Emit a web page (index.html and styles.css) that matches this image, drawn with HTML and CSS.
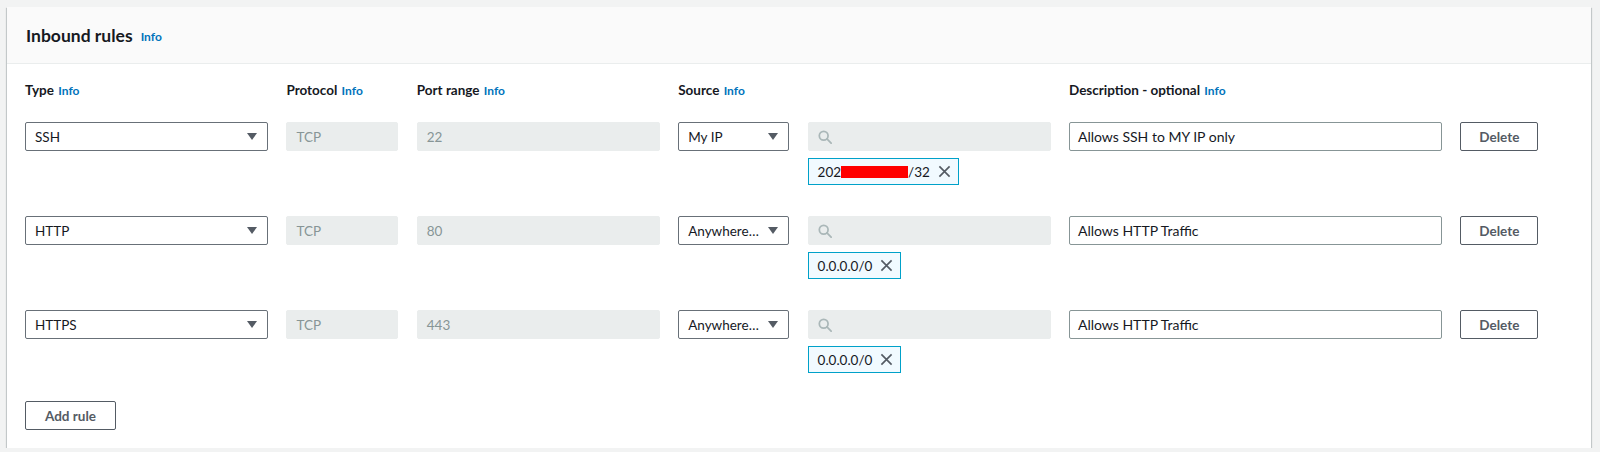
FILE: index.html
```html
<!DOCTYPE html>
<html>
<head>
<meta charset="utf-8">
<link rel="stylesheet" href="styles.css">
</head>
<body>
<div class="panel">
  <div class="panel-header">
    <h2 class="title">Inbound rules</h2>
    <a class="info">Info</a>
  </div>
  <div class="panel-body">
    <div class="grid labels">
      <div class="label">Type <a class="info">Info</a></div>
      <div class="label">Protocol <a class="info">Info</a></div>
      <div class="label">Port range <a class="info">Info</a></div>
      <div class="label">Source <a class="info">Info</a></div>
      <div></div>
      <div class="label">Description - optional <a class="info">Info</a></div>
      <div></div>
    </div>

    <div class="grid rule">
      <div class="select"><span>SSH</span><span class="caret"></span></div>
      <div class="field disabled">TCP</div>
      <div class="field disabled">22</div>
      <div class="select"><span>My IP</span><span class="caret"></span></div>
      <div class="source">
        <div class="field disabled search"><svg class="search-icon" viewBox="0 0 16 16"><circle cx="6.5" cy="6.5" r="5" fill="none" stroke="currentColor" stroke-width="2"/><path d="M10.2 10.2 L15 15" stroke="currentColor" stroke-width="2" stroke-linecap="round"/></svg></div>
        <div class="chip"><span>202</span><span class="redact"></span><span>/32</span><svg class="x" viewBox="0 0 14 14"><path d="M1.5 1.5 L12.5 12.5 M12.5 1.5 L1.5 12.5" stroke="currentColor" stroke-width="1.8" fill="none"/></svg></div>
      </div>
      <div class="field desc">Allows SSH to MY IP only</div>
      <button class="btn">Delete</button>
    </div>

    <div class="grid rule">
      <div class="select"><span>HTTP</span><span class="caret"></span></div>
      <div class="field disabled">TCP</div>
      <div class="field disabled">80</div>
      <div class="select"><span>Anywhere…</span><span class="caret"></span></div>
      <div class="source">
        <div class="field disabled search"><svg class="search-icon" viewBox="0 0 16 16"><circle cx="6.5" cy="6.5" r="5" fill="none" stroke="currentColor" stroke-width="2"/><path d="M10.2 10.2 L15 15" stroke="currentColor" stroke-width="2" stroke-linecap="round"/></svg></div>
        <div class="chip"><span>0.0.0.0/0</span><svg class="x" viewBox="0 0 14 14"><path d="M1.5 1.5 L12.5 12.5 M12.5 1.5 L1.5 12.5" stroke="currentColor" stroke-width="1.8" fill="none"/></svg></div>
      </div>
      <div class="field desc">Allows HTTP Traffic</div>
      <button class="btn">Delete</button>
    </div>

    <div class="grid rule">
      <div class="select"><span>HTTPS</span><span class="caret"></span></div>
      <div class="field disabled">TCP</div>
      <div class="field disabled">443</div>
      <div class="select"><span>Anywhere…</span><span class="caret"></span></div>
      <div class="source">
        <div class="field disabled search"><svg class="search-icon" viewBox="0 0 16 16"><circle cx="6.5" cy="6.5" r="5" fill="none" stroke="currentColor" stroke-width="2"/><path d="M10.2 10.2 L15 15" stroke="currentColor" stroke-width="2" stroke-linecap="round"/></svg></div>
        <div class="chip"><span>0.0.0.0/0</span><svg class="x" viewBox="0 0 14 14"><path d="M1.5 1.5 L12.5 12.5 M12.5 1.5 L1.5 12.5" stroke="currentColor" stroke-width="1.8" fill="none"/></svg></div>
      </div>
      <div class="field desc">Allows HTTP Traffic</div>
      <button class="btn">Delete</button>
    </div>

    <button class="btn add">Add rule</button>
  </div>
</div>
</body>
</html>
```

FILE: styles.css
```css
html, body {
  margin: 0;
  padding: 0;
}
body {
  background: #f2f3f3;
  padding: 7px 9px 0 7px;
  font-family: Lato, "Liberation Sans", sans-serif;
  color: #16191f;
  font-size: 14px;
}
.panel {
  background: #fff;
  box-shadow: 0 1px 1px 0 rgba(0,28,36,.3), 1px 1px 1px 0 rgba(0,28,36,.15), -1px 1px 1px 0 rgba(0,28,36,.15);
  height: 441px;
  box-sizing: border-box;
}
.panel-header {
  height: 57px;
  box-sizing: border-box;
  background: #fafafa;
  border-bottom: 1px solid #eaeded;
  display: flex;
  align-items: center;
  padding: 0 0 0 19px;
  gap: 8px;
}
.title {
  margin: 0;
  font-size: 17.5px;
  font-weight: 700;
  color: #16191f;
}
.info {
  color: #0073bb;
  font-size: 12px;
  font-weight: 700;
  margin-top: 3px;
}
.panel-body {
  padding: 16px 53px 18px 18px;
}
.grid {
  display: grid;
  grid-template-columns: 243px 112px 243px 111px 243px 373px 78px;
  column-gap: 18.4px;
  align-items: start;
}
.labels {
  height: 20px;
  margin-bottom: 22px;
}
.label {
  font-weight: 700;
  font-size: 13.5px;
  line-height: 20px;
}
.label .info {
  margin-left: 1px;
}
.rule {
  margin-bottom: 31px;
}
.rule:last-of-type {
  margin-bottom: 28px;
}
.select, .field {
  height: 29px;
  box-sizing: border-box;
  border: 1px solid #879596;
  border-radius: 2px;
  padding: 0 9px;
  display: flex;
  align-items: center;
  font-size: 13.5px;
  color: #16191f;
}
.field.desc {
  font-size: 14px;
  padding-left: 8px;
}
.select {
  justify-content: space-between;
  border-color: #687078;
}
.caret {
  width: 0;
  height: 0;
  border-left: 5px solid transparent;
  border-right: 5px solid transparent;
  border-top: 7px solid #545b64;
  margin-right: 1px;
}
.field.disabled {
  background: #eaeded;
  border-color: #eaeded;
  color: #879596;
}
.source {
  display: flex;
  flex-direction: column;
  align-items: flex-start;
  gap: 7px;
}
.search {
  width: 100%;
}
.search-icon {
  width: 14px;
  height: 14px;
  color: #aab7b8;
}
.chip {
  height: 27px;
  box-sizing: border-box;
  background: #f1faff;
  border: 1px solid #00a1c9;
  display: flex;
  align-items: center;
  padding: 0 7px 0 9px;
  font-size: 13.5px;
}
.redact {
  display: inline-block;
  width: 67px;
  height: 12px;
  background: #ff0000;
}
.x {
  width: 13px;
  height: 13px;
  color: #545b64;
  margin-left: 8px;
}
.btn {
  height: 29px;
  box-sizing: border-box;
  border: 1px solid #545b64;
  border-radius: 2px;
  background: #fff;
  color: #545b64;
  font-family: Lato, "Liberation Sans", sans-serif;
  font-weight: 700;
  font-size: 13.5px;
  padding: 0;
  cursor: pointer;
}
.add {
  width: 91px;
  display: block;
}
```
